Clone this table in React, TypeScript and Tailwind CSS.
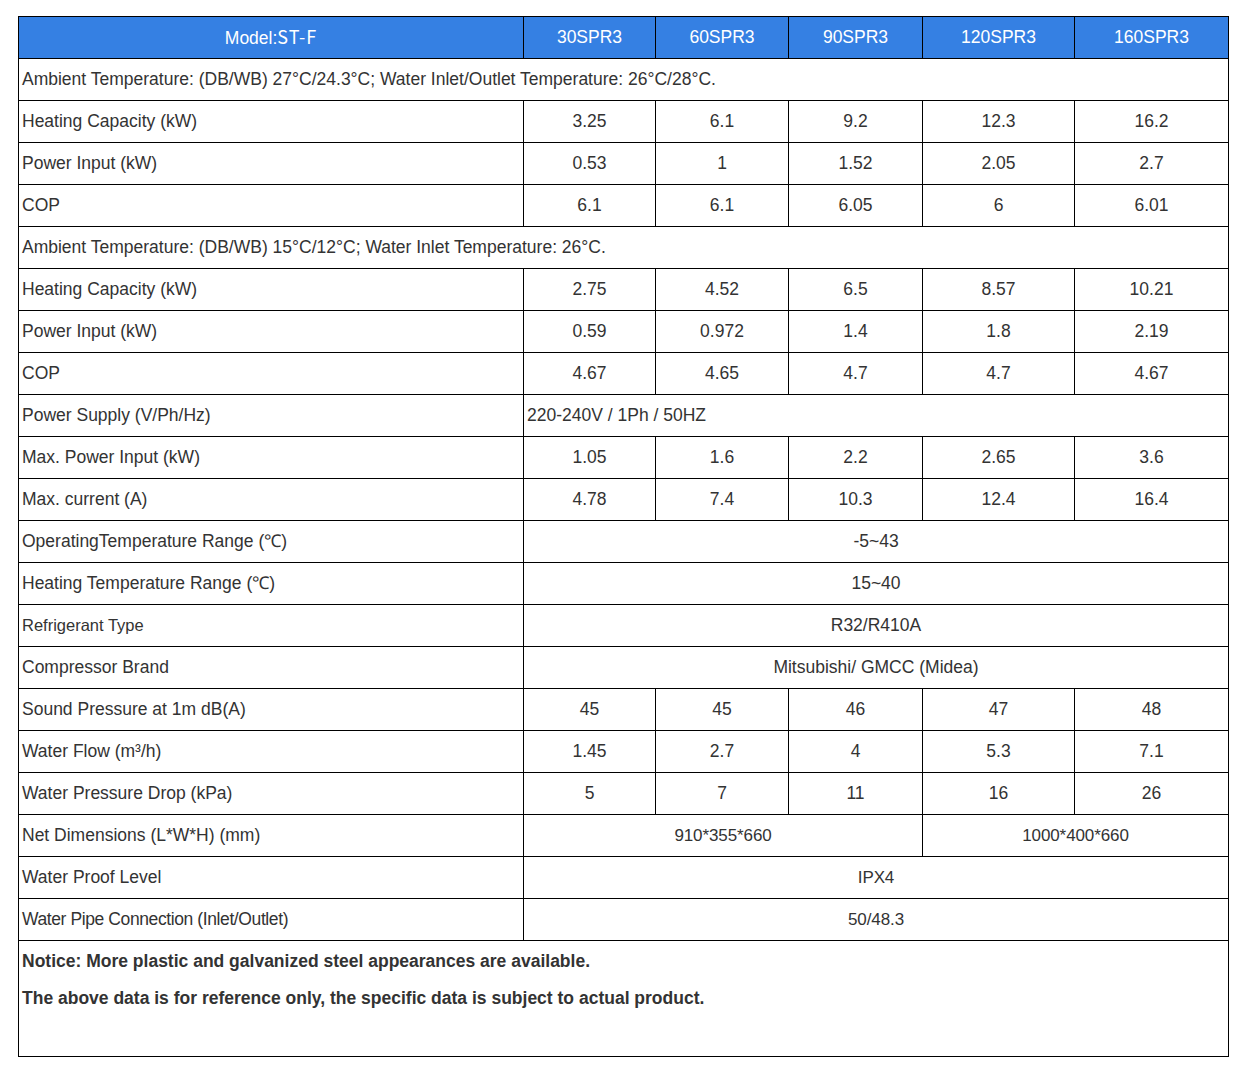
const cols = ["30SPR3", "60SPR3", "90SPR3", "120SPR3", "160SPR3"];

type Row = { label: string; values: string[] };

const rowsA: Row[] = [
  { label: "Heating Capacity (kW)", values: ["3.25", "6.1", "9.2", "12.3", "16.2"] },
  { label: "Power Input (kW)", values: ["0.53", "1", "1.52", "2.05", "2.7"] },
  { label: "COP", values: ["6.1", "6.1", "6.05", "6", "6.01"] },
];

const rowsB: Row[] = [
  { label: "Heating Capacity (kW)", values: ["2.75", "4.52", "6.5", "8.57", "10.21"] },
  { label: "Power Input (kW)", values: ["0.59", "0.972", "1.4", "1.8", "2.19"] },
  { label: "COP", values: ["4.67", "4.65", "4.7", "4.7", "4.67"] },
];

const rowsC: Row[] = [
  { label: "Max. Power Input (kW)", values: ["1.05", "1.6", "2.2", "2.65", "3.6"] },
  { label: "Max. current (A)", values: ["4.78", "7.4", "10.3", "12.4", "16.4"] },
];

const rowsD: Row[] = [
  { label: "Sound Pressure at 1m dB(A)", values: ["45", "45", "46", "47", "48"] },
  { label: "Water Flow (m³/h)", values: ["1.45", "2.7", "4", "5.3", "7.1"] },
  { label: "Water Pressure Drop (kPa)", values: ["5", "7", "11", "16", "26"] },
];

const cell = "border border-black h-[42px] px-[3px] align-middle";
// a few cells in the source use a tighter, condensed-looking face
const narrowLabel = "tracking-[-0.4px]";
const narrowValue = "text-[17px] tracking-[-0.1px]";

function DataRow({ row }: { row: Row }) {
  return (
    <tr>
      <td className={cell}>{row.label}</td>
      {row.values.map((v, i) => (
        <td key={i} className={`${cell} text-center`}>
          {v}
        </td>
      ))}
    </tr>
  );
}

function SpanRow({
  label,
  value,
  labelClass = "",
  valueClass = "",
}: {
  label: string;
  value: string;
  labelClass?: string;
  valueClass?: string;
}) {
  return (
    <tr>
      <td className={`${cell} ${labelClass}`}>{label}</td>
      <td colSpan={5} className={`${cell} text-center ${valueClass}`}>
        {value}
      </td>
    </tr>
  );
}

export default function App() {
  return (
    <div className="min-h-screen bg-white pt-4 pl-[18px] font-['Liberation_Sans',Arial,sans-serif] text-[17.5px] text-[#333]">
      <table className="table-fixed border-collapse w-[1210px]">
        <colgroup>
          <col className="w-[505px]" />
          <col className="w-[132px]" />
          <col className="w-[133px]" />
          <col className="w-[134px]" />
          <col className="w-[152px]" />
          <col className="w-[154px]" />
        </colgroup>
        <thead>
          <tr className="bg-[#3580e3] text-white">
            <th className={`${cell} font-normal text-center`}>
              Model:
              <span className="font-['Noto_Sans_CJK_SC','Noto_Sans',sans-serif] text-[18px] tracking-[1px]">
                ST-F
              </span>
            </th>
            {cols.map((c) => (
              <th key={c} className={`${cell} font-normal text-center`}>
                {c}
              </th>
            ))}
          </tr>
        </thead>
        <tbody>
          <tr>
            <td colSpan={6} className={cell}>
              Ambient Temperature: (DB/WB) 27°C/24.3°C; Water Inlet/Outlet Temperature: 26°C/28°C.
            </td>
          </tr>
          {rowsA.map((r, i) => (
            <DataRow key={i} row={r} />
          ))}
          <tr>
            <td colSpan={6} className={cell}>
              Ambient Temperature: (DB/WB) 15°C/12°C; Water Inlet Temperature: 26°C.
            </td>
          </tr>
          {rowsB.map((r, i) => (
            <DataRow key={i} row={r} />
          ))}
          <tr>
            <td className={cell}>Power Supply (V/Ph/Hz)</td>
            <td colSpan={5} className={cell}>
              220-240V / 1Ph / 50HZ
            </td>
          </tr>
          {rowsC.map((r, i) => (
            <DataRow key={i} row={r} />
          ))}
          <SpanRow label="OperatingTemperature Range (℃)" value="-5~43" />
          <SpanRow label="Heating Temperature Range (℃)" value="15~40" />
          <SpanRow label="Refrigerant Type" value="R32/R410A" labelClass="text-[16.5px]" />
          <SpanRow label="Compressor Brand" value="Mitsubishi/ GMCC (Midea)" />
          {rowsD.map((r, i) => (
            <DataRow key={i} row={r} />
          ))}
          <tr>
            <td className={cell}>Net Dimensions (L*W*H) (mm)</td>
            <td colSpan={3} className={`${cell} text-center ${narrowValue}`}>
              910*355*660
            </td>
            <td colSpan={2} className={`${cell} text-center ${narrowValue}`}>
              1000*400*660
            </td>
          </tr>
          <SpanRow label="Water Proof Level" value="IPX4" valueClass={narrowValue} />
          <SpanRow
            label="Water Pipe Connection (Inlet/Outlet)"
            value="50/48.3"
            labelClass={narrowLabel}
            valueClass={narrowValue}
          />
          <tr>
            <td colSpan={6} className="border border-black h-[116px] px-[3px] pt-[9px] align-top">
              <p className="font-bold leading-[22px]">
                Notice: More plastic and galvanized steel appearances are available.
              </p>
              <p className="font-bold leading-[22px] mt-[15px]">
                The above data is for reference only, the specific data is subject to actual product.
              </p>
            </td>
          </tr>
        </tbody>
      </table>
    </div>
  );
}
